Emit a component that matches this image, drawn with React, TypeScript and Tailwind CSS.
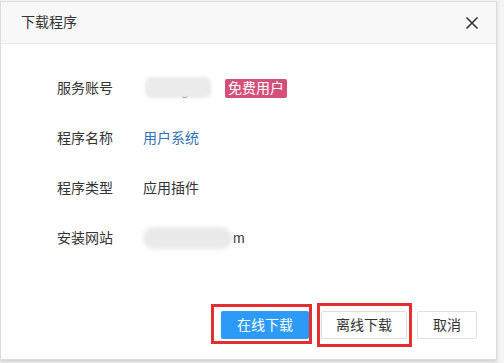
import React from 'react';

const Row: React.FC<{ label: string; children: React.ReactNode }> = ({ label, children }) => (
  <div className="flex items-center h-[50px]">
    <span className="w-[86px] text-[#333]">{label}</span>
    <div className="flex items-center">{children}</div>
  </div>
);

// blurred-out private text
const Blur: React.FC<{ w: string }> = ({ w }) => (
  <span className={`inline-block h-[22px] ${w} rounded-full bg-[#e9e9e9] blur-[2px]`} />
);

export default function App() {
  return (
    <div
      className="w-[504px] h-[363px] bg-[#f4f4f4] overflow-hidden text-[14px]"
      style={{ fontFamily: '"Liberation Sans", "Noto Sans CJK SC", sans-serif' }}
    >
      <div className="w-[497px] h-[359px] mt-[1px] bg-white border border-[#dcdcdc] flex flex-col shadow-[0_2px_3px_rgba(0,0,0,0.15)]">
        {/* Header */}
        <div className="h-[42px] shrink-0 bg-[#f8f8f8] border-b border-[#e8e8e8] flex items-center justify-between pl-[20px] pr-[17px]">
          <span className="text-[#333]">下载程序</span>
          <svg width="14" height="14" viewBox="0 0 14 14" className="text-[#333]">
            <path d="M1.5 1.5 L12.5 12.5 M12.5 1.5 L1.5 12.5" stroke="currentColor" strokeWidth="1.6" fill="none" />
          </svg>
        </div>

        {/* Body */}
        <div className="flex-1 pl-[56px] pt-[19px]">
          <Row label="服务账号">
            <span className="relative inline-flex items-center ml-[2px]">
              <span className="absolute left-[36px] top-[1px] text-[#333]">g</span>
              <span className="relative inline-block h-[21px] w-[66px] -mt-[2px] rounded-[6px] bg-[#ebebeb] blur-[1.5px]" />
            </span>
            <span className="ml-[14px] px-[3px] h-[19px] leading-[19px] rounded-[2px] bg-[#d4507b] text-white">免费用户</span>
          </Row>
          <Row label="程序名称">
            <span className="text-[#2f72b5]">用户系统</span>
          </Row>
          <Row label="程序类型">
            <span className="text-[#333]">应用插件</span>
          </Row>
          <Row label="安装网站">
            <Blur w="w-[89px]" />
            <span className="text-[#333] ml-[1px]">m</span>
          </Row>
        </div>

        {/* Footer */}
        <div className="h-[38px] shrink-0 mb-[10px] flex items-start justify-end pr-[19px]">
          <div className="relative">
            <button className="w-[88px] h-[28px] rounded-[2px] bg-[#2b9bf7] text-white">在线下载</button>
            <span className="absolute -left-[10px] -right-[3px] -top-[7px] -bottom-[5px] border-[3px] border-[#e32f2f] pointer-events-none" />
          </div>
          <div className="relative ml-[12px]">
            <button className="w-[86px] h-[28px] rounded-[2px] bg-white border border-[#dedede] text-[#333]">离线下载</button>
            <span className="absolute -left-[4px] -right-[5px] -top-[8px] -bottom-[8px] border-[3px] border-[#e32f2f] pointer-events-none" />
          </div>
          <button className="ml-[10px] w-[60px] h-[28px] rounded-[2px] bg-white border border-[#dedede] text-[#333]">取消</button>
        </div>
      </div>
    </div>
  );
}
